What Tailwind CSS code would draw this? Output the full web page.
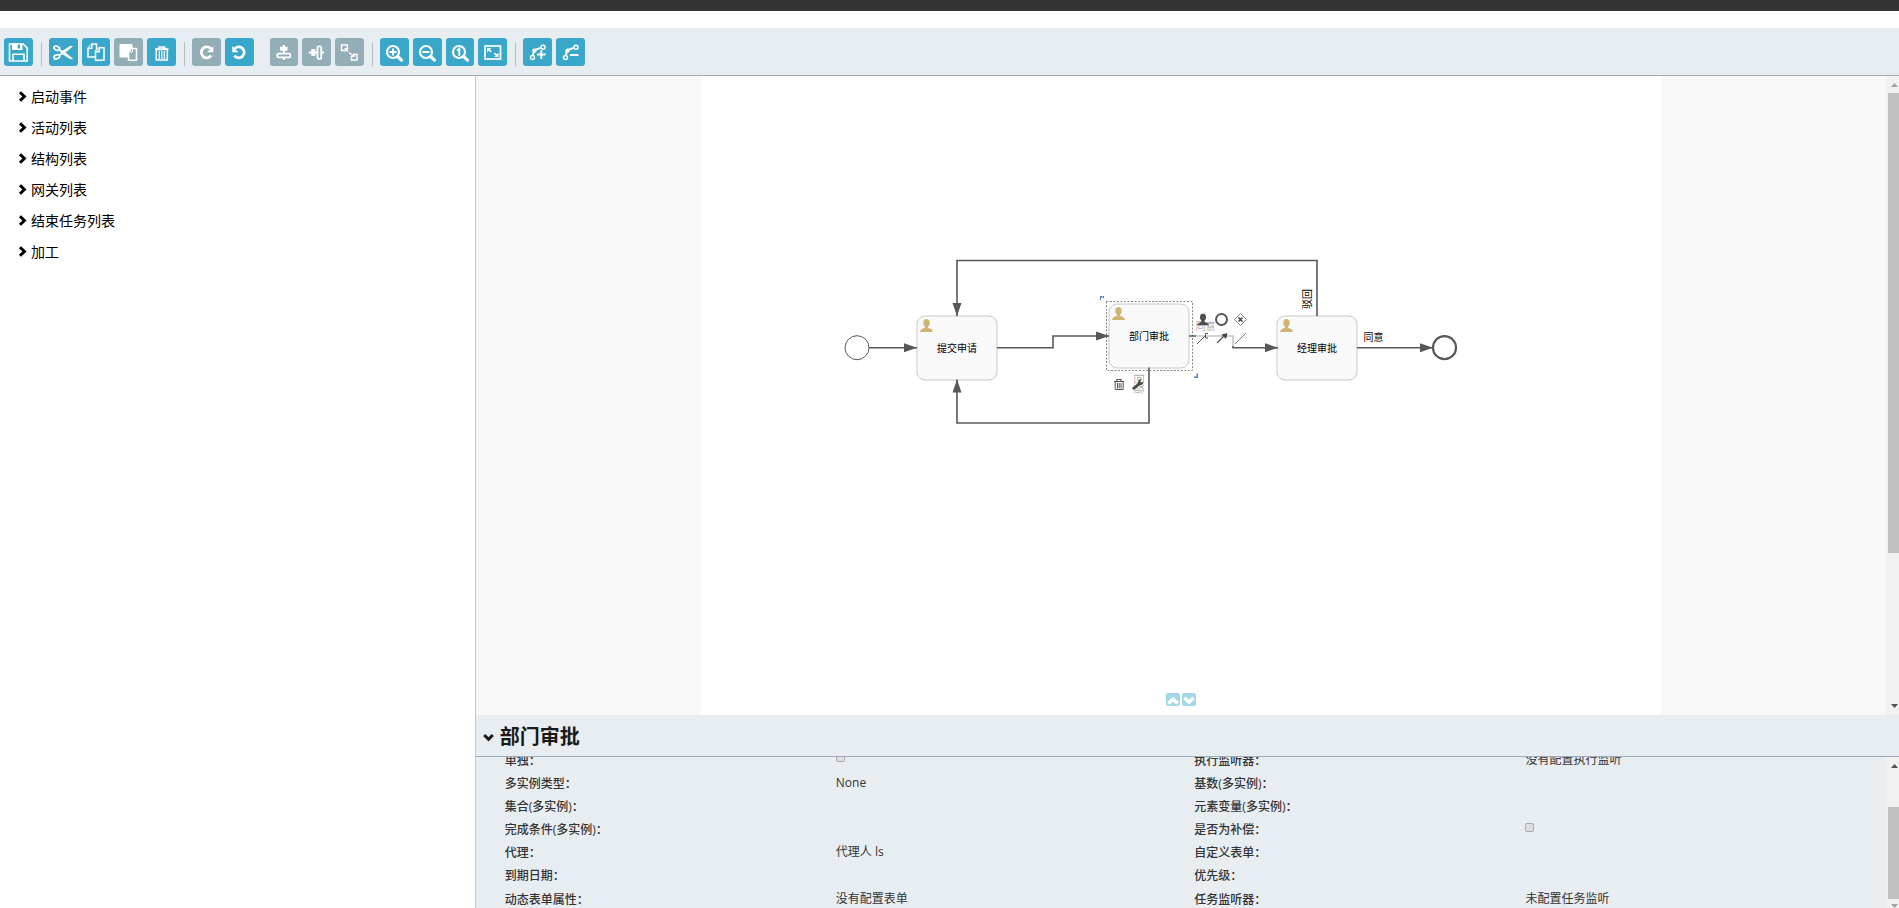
<!DOCTYPE html>
<html lang="zh-CN">
<head>
<meta charset="utf-8">
<title>流程设计器</title>
<script src="https://cdn.jsdelivr.net/npm/@tailwindcss/browser@4"></script>
</head>
<body class="flex h-screen flex-col overflow-hidden bg-white font-['Open_Sans','Noto_Sans_CJK_SC',sans-serif] text-black">

<svg class="absolute size-0" aria-hidden="true">
  <defs>
    <symbol id="lens" viewBox="0 0 29 28">
      <circle cx="13" cy="14" r="6" fill="none" stroke="#fff" stroke-width="2.200"/>
      <path d="M17.500 18.500l4 3.600" stroke="#fff" stroke-width="3.200" stroke-linecap="round"/>
    </symbol>
    <symbol id="route" viewBox="0 0 29 28">
      <g fill="none" stroke="#fff" stroke-width="1.500">
        <circle cx="9.500" cy="19.500" r="2"/><circle cx="20" cy="9.300" r="2"/>
        <path d="M9.800 17.500l1.400-5.200 7-2.600" stroke-width="1.800"/>
      </g>
      <circle cx="11.400" cy="12.600" r="2.200" fill="#fff"/>
    </symbol>
    <symbol id="person" viewBox="0 0 13 13" preserveAspectRatio="none">
      <path d="M5 6.500h3c-.2 1.600 0 2.300.6 2.600C10.300 9.800 12.700 10.400 13 13H0c.3-2.600 2.700-3.200 4.400-3.900.6-.3.8-1 .6-2.600z"/>
      <ellipse cx="6.500" cy="4" rx="3.200" ry="4"/>
    </symbol>
    <symbol id="chevron" viewBox="0 0 9 11"><path d="M2 1.200L6.400 5.500 2 9.800" fill="none" stroke="currentColor" stroke-width="3"/></symbol>
    <marker id="tip" markerUnits="userSpaceOnUse" markerWidth="14" markerHeight="10" refX="13" refY="5" orient="auto"><path d="M0 0.500L13 5 0 9.500z" fill="#585858"/></marker>
  </defs>
</svg>

<header class="h-[11px] shrink-0 bg-[#333]"></header>

<nav class="mt-[17px] flex h-12 shrink-0 items-start gap-1 border-b border-[#9fa9b9] bg-[#e8edf1] px-1 pt-2.5" aria-label="工具栏">
  <button aria-label="保存" class="h-7 w-[29px] rounded-[3px] bg-[#38a7c9]"><svg viewBox="0 0 29 28" class="size-full"><path d="M5.500 6h13.700l4 4v13H5.500z" fill="none" stroke="#fff" stroke-width="1.600"/><path d="M8 5.500h10.500v6.500H8z" fill="#fff"/><path d="M13.700 6.500h2.300v4h-2.300z" fill="#38a7c9"/><path d="M9 23v-6.800h11V23" fill="none" stroke="#fff" stroke-width="1.600"/></svg></button>
  <span class="ml-1 mt-1 mr-[3px] h-6 w-px bg-[#b5bdc3]"></span>
  <button aria-label="剪切" class="h-7 w-[29px] rounded-[3px] bg-[#38a7c9]"><svg viewBox="0 0 29 28" class="size-full"><g fill="none" stroke="#fff"><ellipse cx="7.800" cy="10.200" rx="2.900" ry="1.900" transform="rotate(25 7.800 10.200)" stroke-width="1.700"/><ellipse cx="7.800" cy="18.800" rx="2.900" ry="1.900" transform="rotate(-25 7.800 18.800)" stroke-width="1.700"/></g><path d="M10 10.500l3.500 2.200L21 8c1-.5 2.300-.4 3 .2l-7.500 6.300L24 20.800c-.7.600-2 .7-3 .2l-7.500-4.700L10 18.500l-.6-1.800 3-2.200-3-2.200z" fill="#fff"/></svg></button>
  <button aria-label="复制" class="h-7 w-7 rounded-[3px] bg-[#38a7c9]"><svg viewBox="0 0 28 28" class="size-full"><g fill="#38a7c9" stroke="#fff" stroke-width="1.500"><path d="M6 10.300L9.800 6H14.500v13H6z"/><path d="M9.800 6v4.300H6"/><path d="M13.500 13.500l3.700-3.700H22v12.400h-8.500z"/><path d="M17.200 10v3.700h-3.700"/></g></svg></button>
  <button aria-label="粘贴" class="h-7 w-[29px] rounded-[3px] bg-[#93aeb6]"><svg viewBox="0 0 29 28" class="size-full"><rect x="5.500" y="6" width="13" height="13.500" rx="1" fill="#fff"/><path d="M14.500 13.500l3-3H22.500v11.700h-8z" fill="#93aeb6" stroke="#fff" stroke-width="1.500"/><path d="M18.500 10v4h-4" fill="none" stroke="#fff"/></svg></button>
  <button aria-label="删除" class="h-7 w-[29px] rounded-[3px] bg-[#38a7c9]"><svg viewBox="0 0 29 28" class="size-full"><path d="M8 11h13.500M12 10.500V9h5.500v1.500" fill="none" stroke="#fff" stroke-width="1.700"/><path d="M9.300 11.500h11V22h-11z" fill="none" stroke="#fff" stroke-width="1.600"/><path d="M12.300 13v8M14.800 13v8M17.300 13v8" stroke="#fff" stroke-width="1.200"/></svg></button>
  <span class="ml-1 mt-1 mr-[3px] h-6 w-px bg-[#b5bdc3]"></span>
  <button aria-label="重做" class="h-7 w-[29px] rounded-[3px] bg-[#93aeb6]"><svg viewBox="0 0 29 28" class="size-full"><path d="M18.700 10.500a5.500 5.500 0 1 0 .5 7.200" fill="none" stroke="#fff" stroke-width="2.800"/><path d="M21.300 8v6.200h-6.200z" fill="#fff"/></svg></button>
  <button aria-label="撤销" class="h-7 w-[29px] rounded-[3px] bg-[#38a7c9]"><svg viewBox="0 0 29 28" class="size-full"><path d="M9.800 10.500a5.500 5.500 0 1 1-.5 7.200" fill="none" stroke="#fff" stroke-width="2.800"/><path d="M7.200 8v6.200h6.200z" fill="#fff"/></svg></button>
  <span class="w-2"></span>
  <button aria-label="垂直对齐" class="h-7 w-7 rounded-[3px] bg-[#93aeb6]"><svg viewBox="0 0 28 28" class="size-full"><path d="M13.800 7v15" stroke="#fff" stroke-width="2"/><rect x="10" y="8.700" width="7.500" height="4" fill="#fff"/><rect x="7.300" y="15.700" width="13" height="3.600" rx="1" fill="#93aeb6" stroke="#fff" stroke-width="1.800"/></svg></button>
  <button aria-label="水平对齐" class="h-7 w-[29px] rounded-[3px] bg-[#93aeb6]"><svg viewBox="0 0 29 28" class="size-full"><path d="M6.700 14.500H22" stroke="#fff" stroke-width="2"/><rect x="9.300" y="11" width="4" height="7" fill="#fff"/><rect x="15.500" y="8.300" width="3.700" height="12.500" rx="1" fill="#93aeb6" stroke="#fff" stroke-width="1.800"/></svg></button>
  <button aria-label="相同大小" class="h-7 w-[29px] rounded-[3px] bg-[#93aeb6]"><svg viewBox="0 0 29 28" class="size-full"><g fill="none" stroke="#fff" stroke-width="1.500"><path d="M9 12.500H6.500V7h5.800v3"/><path d="M19 16.500h3V22h-5.500v-2.500"/><path d="M11 11.500l7 6.500" stroke-dasharray="3 1.500"/></g><path d="M9.500 10h4.500l-4.500 4.500zM19.500 14.500v4.500H15z" fill="#fff"/></svg></button>
  <span class="ml-1 mt-1 mr-[3px] h-6 w-px bg-[#b5bdc3]"></span>
  <button aria-label="放大" class="h-7 w-[29px] rounded-[3px] bg-[#38a7c9]"><svg viewBox="0 0 29 28" class="size-full"><use href="#lens"/><path d="M9.500 14h7M13 10.500v7" stroke="#fff" stroke-width="2"/></svg></button>
  <button aria-label="缩小" class="h-7 w-[29px] rounded-[3px] bg-[#38a7c9]"><svg viewBox="0 0 29 28" class="size-full"><use href="#lens"/><path d="M9.500 14h7" stroke="#fff" stroke-width="2"/></svg></button>
  <button aria-label="实际大小" class="h-7 w-7 rounded-[3px] bg-[#38a7c9]"><svg viewBox="0 0 28 28" class="size-full"><use href="#lens" width="29" height="28"/><path d="M11 12.500l2.300-1.800v7" fill="none" stroke="#fff" stroke-width="2"/></svg></button>
  <button aria-label="适应窗口" class="h-7 w-[29px] rounded-[3px] bg-[#38a7c9]"><svg viewBox="0 0 29 28" class="size-full"><rect x="7" y="8" width="15.500" height="13" fill="none" stroke="#fff" stroke-width="1.700"/><path d="M9 10h4.300L9 14.300zM20.500 19h-4.300l4.300-4.300z" fill="#fff"/><path d="M10.500 11.500l2.800 2.300M19 17.500l-2.800-2.300" stroke="#fff" stroke-width="1.600"/></svg></button>
  <span class="ml-1 mt-1 mr-[3px] h-6 w-px bg-[#b5bdc3]"></span>
  <button aria-label="添加折点" class="h-7 w-[29px] rounded-[3px] bg-[#38a7c9]"><svg viewBox="0 0 29 28" class="size-full"><use href="#route"/><path d="M14 16.500h8.500M18.300 12.500v8.500" stroke="#fff" stroke-width="2"/></svg></button>
  <button aria-label="移除折点" class="h-7 w-[29px] rounded-[3px] bg-[#38a7c9]"><svg viewBox="0 0 29 28" class="size-full"><use href="#route"/><path d="M14 17h8.500" stroke="#fff" stroke-width="2"/></svg></button>
</nav>

<div class="flex min-h-0 flex-1">
  <aside class="w-[calc(25%+1px)] shrink-0 border-r border-[#c4c8cb] pt-[5px] pl-[18px]">
    <ul class="text-sm">
      <li><button class="flex h-[31px] items-center gap-1"><svg class="h-[11px] w-[9px]"><use href="#chevron"/></svg>启动事件</button></li>
      <li><button class="flex h-[31px] items-center gap-1"><svg class="h-[11px] w-[9px]"><use href="#chevron"/></svg>活动列表</button></li>
      <li><button class="flex h-[31px] items-center gap-1"><svg class="h-[11px] w-[9px]"><use href="#chevron"/></svg>结构列表</button></li>
      <li><button class="flex h-[31px] items-center gap-1"><svg class="h-[11px] w-[9px]"><use href="#chevron"/></svg>网关列表</button></li>
      <li><button class="flex h-[31px] items-center gap-1"><svg class="h-[11px] w-[9px]"><use href="#chevron"/></svg>结束任务列表</button></li>
      <li><button class="flex h-[31px] items-center gap-1"><svg class="h-[11px] w-[9px]"><use href="#chevron"/></svg>加工</button></li>
    </ul>
  </aside>

  <div class="flex min-w-0 flex-1 flex-col">
    <main class="flex min-h-0 flex-1">
      <div class="relative flex min-w-0 flex-1 justify-center overflow-hidden bg-[#f8f8f8]">
        <svg class="h-full w-[960px] shrink-0 bg-white" viewBox="701 76 960 639" preserveAspectRatio="xMidYMin slice" font-size="10" text-anchor="middle">
          <!-- events -->
          <circle cx="857" cy="347.700" r="12" fill="#fff" stroke="#585858"/>
          <circle cx="1444.500" cy="347.700" r="11.500" fill="#fff" stroke="#585858" stroke-width="2.200"/>
          <!-- tasks -->
          <g fill="#f9f9f9" stroke="#c8c8c8">
            <rect x="917" y="316" width="80" height="64" rx="8"/>
            <rect x="1109" y="304" width="80" height="64" rx="8"/>
            <rect x="1277" y="316" width="80" height="64" rx="8"/>
          </g>
          <!-- selection frame -->
          <rect x="1106.500" y="301.500" width="86" height="69" fill="none" stroke="#888" stroke-dasharray="2 1.500"/>
          <!-- sequence flows -->
          <g fill="none" stroke="#585858" stroke-width="1.600" marker-end="url(#tip)">
            <path d="M869 347.700H917"/>
            <path d="M997 347.700H1053V336H1109"/>
            <path d="M1317 316V260.500H957V316"/>
            <path d="M1149 367.500V423H957V379.500"/>
            <path d="M1189 336H1233V347.700H1278"/>
            <path d="M1357 347.700H1433"/>
          </g>
          <rect x="1196" y="334" width="39" height="12" fill="#fff" opacity=".65"/>
          <g fill="#d1b575">
            <use href="#person" x="920" y="319" width="13" height="13"/>
            <use href="#person" x="1112" y="307" width="13" height="13"/>
            <use href="#person" x="1280" y="319" width="13" height="13"/>
          </g>
          <g fill="#000">
            <text x="957" y="352">提交申请</text>
            <text x="1149" y="340">部门审批</text>
            <text x="1317" y="352">经理审批</text>
            <text x="1373.500" y="341">同意</text>
            <text transform="translate(1311 299) rotate(-90)">驳回</text>
          </g>
          <g fill="#000" opacity=".35">
            <text x="1205.500" y="330">同意</text>
            <text transform="translate(1143 384) rotate(-90)">驳回</text>
          </g>
          <g fill="#4f7fc4">
            <path d="M1100 296h2v1.500h-1v2.500h-1zM1102.500 296h1.500v2h-1.500z"/>
            <path d="M1198 378h-4v-1.500h2.500v-3h1.500z"/>
          </g>
          <!-- quick actions -->
          <use href="#person" x="1197" y="313.500" width="12" height="12" fill="#4d4d4d"/>
          <circle cx="1221.500" cy="319.500" r="5.500" fill="#fff" stroke="#555" stroke-width="2"/>
          <path d="M1240.500 313.500l6 6-6 6-6-6z" fill="#fff" stroke="#666" stroke-width=".8"/>
          <path d="M1238.500 317.500l4 4M1242.500 317.500l-4 4" stroke="#444" stroke-width="1.500"/>
          <g fill="none" stroke="#555">
            <path d="M1197 344L1205.500 335.500M1208 333.500h-2.500v4.500h2.500"/>
            <path d="M1217 343l8-8" stroke-width="1.200"/>
            <path d="M1235 344l11-11" stroke="#777"/>
          </g>
          <path d="M1227.500 333l-1.500 6-4.500-4.500z" fill="#444"/>
          <g fill="none" stroke="#555">
            <path d="M1114 381.500h10M1117 381v-1.500h4v1.500" stroke-width="1.200"/>
            <path d="M1115.200 382v7.500h8V382M1117.500 383v5.500M1119.200 383v5.500M1121 383v5.500"/>
          </g>
          <path d="M1132.500 387.500l5.500-4.500c-.3-2.200 1.300-4.300 3.800-3.800l-1.500 2 .7 1.300 2.200-.5c.2 2.200-1.700 3.500-3.500 3.200l-5 4.300c-1.500.8-3-.6-2.200-2z" fill="#4a4a4a"/>
        </svg>
        <div class="absolute bottom-[9px] left-1/2 flex -translate-x-1/2 gap-0.5">
          <button aria-label="上移" class="h-[13px] w-3.5 rounded-[2px] bg-[#a1d8e5]"><svg viewBox="0 0 14 13" class="size-full"><path d="M2.300 10.500L7 6l4.700 4.500" fill="none" stroke="#fff" stroke-width="3.400"/></svg></button>
          <button aria-label="下移" class="h-[13px] w-3.5 rounded-[2px] bg-[#a1d8e5]"><svg viewBox="0 0 14 13" class="size-full"><path d="M2.300 4.700L7 9.200l4.700-4.500" fill="none" stroke="#fff" stroke-width="3.400"/></svg></button>
        </div>
      </div>
      <div class="flex w-[13px] shrink-0 flex-col bg-[#f1f1f1] pl-0.5" aria-hidden="true">
        <svg class="h-[17px] w-[11px] shrink-0" viewBox="0 0 11 17"><path d="M3 11h7L6.500 7z" fill="#a3a3a3"/></svg>
        <div class="h-[460px] bg-[#c1c1c1]"></div>
        <svg class="mt-auto h-[17px] w-[11px] shrink-0" viewBox="0 0 11 17"><path d="M3 6h7l-3.500 4z" fill="#505050"/></svg>
      </div>
    </main>

    <section class="flex h-[193px] shrink-0 flex-col bg-[#e8edf1] text-[#333]">
      <h2 class="h-[42px] shrink-0 border-b border-[#9fa9b9]"><button class="flex h-full items-center gap-1.5 pt-0.5 pl-[7px] text-xl font-bold text-[#1a1a1a]"><svg class="mt-0.5 h-[9px] w-[11px]" viewBox="0 0 11 9"><path d="M1.200 2L5.500 6.400 9.800 2" fill="none" stroke="currentColor" stroke-width="3"/></svg>部门审批</button></h2>
      <div class="flex min-h-0 flex-1">
        <div class="min-w-0 flex-1 overflow-hidden pr-0.5 pl-[29px]">
          <table class="-mt-2 w-full table-fixed text-left text-xs [&_th]:font-['Open_Sans','Noto_Sans_CJK_TC',sans-serif] [&_th]:font-medium">
            <colgroup><col class="w-[24%]"><col class="w-[26%]"><col class="w-[24%]"><col class="w-[26%]"></colgroup>
            <tbody>
              <tr class="h-[23px]"><th><label for="exclusive">单独：</label></th><td class="align-top"><input id="exclusive" type="checkbox" class="mt-1 block size-[9px] appearance-none rounded-[2px] border border-[#aaa] bg-[#dedede]"></td><th>执行监听器：</th><td class="pb-0.5">没有配置执行监听</td></tr>
              <tr class="h-[23px]"><th>多实例类型：</th><td class="pb-0.5">None</td><th>基数(多实例)：</th><td></td></tr>
              <tr class="h-[23px]"><th>集合(多实例)：</th><td></td><th>元素变量(多实例)：</th><td></td></tr>
              <tr class="h-[23px]"><th>完成条件(多实例)：</th><td></td><th><label for="compensation">是否为补偿：</label></th><td class="pb-1"><input id="compensation" type="checkbox" class="block size-[9px] appearance-none rounded-[2px] border border-[#aaa] bg-[#dedede]"></td></tr>
              <tr class="h-[23px]"><th>代理：</th><td class="pb-0.5">代理人 ls</td><th>自定义表单：</th><td></td></tr>
              <tr class="h-[23px]"><th>到期日期：</th><td></td><th>优先级：</th><td></td></tr>
              <tr class="h-[25px]"><th>动态表单属性：</th><td class="pb-0.5">没有配置表单</td><th>任务监听器：</th><td class="pb-0.5">未配置任务监听</td></tr>
            </tbody>
          </table>
        </div>
        <div class="flex w-[13px] shrink-0 flex-col overflow-hidden bg-[#f1f1f1] pl-0.5" aria-hidden="true">
          <svg class="h-[50px] w-[11px] shrink-0" viewBox="0 0 11 50"><path d="M3 11h7L6.500 7z" fill="#505050"/></svg>
          <div class="h-[92px] shrink-0 bg-[#c1c1c1]"></div>
          <svg class="h-[9px] w-[11px] shrink-0" viewBox="0 0 11 9"><path d="M3 5h7L6.500 9z" fill="#a3a3a3"/></svg>
        </div>
      </div>
    </section>
  </div>
</div>
</body>
</html>
